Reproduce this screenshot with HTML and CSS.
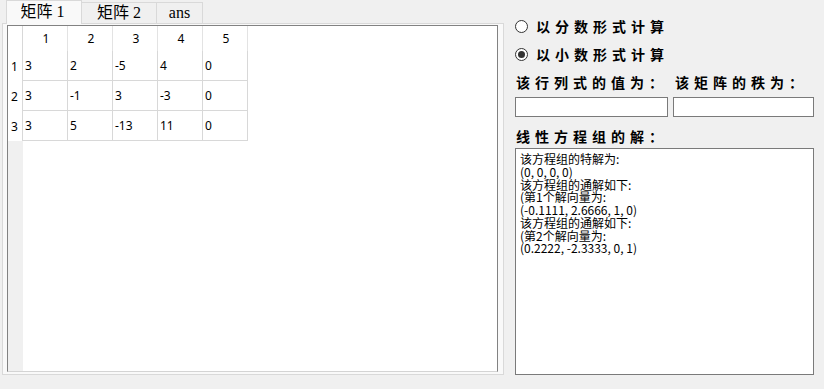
FILE: index.html
```html
<!DOCTYPE html>
<html lang="zh-CN">
<head>
<meta charset="utf-8">
<title>矩阵计算</title>
<link rel="stylesheet" href="styles.css">
</head>
<body>
<div class="window">
  <div class="tabwidget">
    <div class="tabbar">
      <div class="tab tab-1 selected">矩阵 1</div>
      <div class="tab tab-2">矩阵 2</div>
      <div class="tab tab-3">ans</div>
    </div>
    <div class="page">
      <div class="table">
        <div class="grid">
          <div class="corner"></div>
          <div class="hh">1</div><div class="hh">2</div><div class="hh">3</div><div class="hh">4</div><div class="hh">5</div>
          <div class="vh">1</div>
          <div class="cell">3</div><div class="cell">2</div><div class="cell">-5</div><div class="cell">4</div><div class="cell">0</div>
          <div class="vh">2</div>
          <div class="cell">3</div><div class="cell">-1</div><div class="cell">3</div><div class="cell">-3</div><div class="cell">0</div>
          <div class="vh">3</div>
          <div class="cell">3</div><div class="cell">5</div><div class="cell">-13</div><div class="cell">11</div><div class="cell">0</div>
        </div>
        <div class="filler"><div class="vh-strip"></div></div>
      </div>
    </div>
  </div>
  <div class="panel">
    <div class="radio-row"><span class="radio"></span><span class="brush">以分数形式计算</span></div>
    <div class="radio-row"><span class="radio checked"></span><span class="brush">以小数形式计算</span></div>
    <div class="label-row"><span class="brush det-label">该行列式的值为：</span><span class="brush">该矩阵的秩为：</span></div>
    <div class="input-row"><div class="input input-det"></div><div class="input input-rank"></div></div>
    <div class="label-row solve-row"><span class="brush">线性方程组的解：</span></div>
    <div class="output">
      <div class="line">该方程组的特解为:</div>
      <div class="line">(0, 0, 0, 0)</div>
      <div class="line">该方程组的通解如下:</div>
      <div class="line">(第1个解向量为:</div>
      <div class="line">(-0.1111, 2.6666, 1, 0)</div>
      <div class="line">该方程组的通解如下:</div>
      <div class="line">(第2个解向量为:</div>
      <div class="line">(0.2222, -2.3333, 0, 1)</div>
    </div>
  </div>
</div>
</body>
</html>
```

FILE: styles.css
```css
html, body {
  margin: 0;
  padding: 0;
}
body {
  background: #f0f0f0;
  width: 824px;
  height: 389px;
  overflow: hidden;
  font-family: "Noto Sans", "Noto Sans CJK SC", sans-serif;
}
.window {
  display: flex;
  align-items: flex-start;
  padding-left: 2px;
  gap: 11px;
}
.tabwidget {
  width: 502px;
  display: flex;
  flex-direction: column;
}
.tabbar {
  display: flex;
  align-items: flex-start;
  height: 23px;
  padding-left: 4px;
  position: relative;
  z-index: 1;
}
.tab {
  box-sizing: border-box;
  height: 21px;
  margin-top: 2px;
  border: 1px solid #d9d9d9;
  border-bottom: none;
  border-left: none;
  background: #f0f0f0;
  font-family: "Liberation Serif", "Noto Sans CJK SC", serif;
  font-size: 16px;
  color: #000;
  display: flex;
  align-items: center;
  justify-content: center;
  line-height: 1;
}
.tab-1 { width: 76px; padding-right: 3px; }
.tab-2 { width: 75px; }
.tab-3 { width: 46px; }
.tab.selected {
  height: 24px;
  margin-top: 0;
  border-left: 1px solid #d9d9d9;
  background: #f9f9f9;
  padding-bottom: 1px;
}
.page {
  box-sizing: border-box;
  height: 352px;
  border: 1px solid #d9d9d9;
  background: #f9f9f9;
  padding: 1px 5px 2px 4px;
}
.table {
  box-sizing: border-box;
  height: 347px;
  border: 1px solid #828282;
  border-bottom-color: #d4d4d4;
  background: #fff;
  display: flex;
  flex-direction: column;
}
.grid {
  display: grid;
  grid-template-columns: 15px repeat(5, 45px);
  grid-template-rows: 25px repeat(3, 30px);
  font-size: 12px;
  color: #000;
}
.corner, .vh {
  border-right: 1px solid #d8d8d8;
}
.hh {
  border-right: 1px solid #e3e3e3;
  display: flex;
  align-items: center;
  justify-content: center;
  padding-left: 2px;
}
.vh {
  display: flex;
  align-items: center;
  padding-left: 3px;
}
.cell {
  border-right: 1px solid #d8d8d8;
  border-bottom: 1px solid #d8d8d8;
  display: flex;
  align-items: center;
  padding-left: 2px;
}
.filler {
  flex: 1;
  display: flex;
}
.vh-strip {
  width: 15px;
  background: #f0f0f0;
}
.panel {
  width: 299px;
  display: flex;
  flex-direction: column;
  padding-top: 12px;
}
.brush {
  font-family: "Noto Sans CJK SC", sans-serif;
  font-weight: 700;
  font-size: 14px;
  letter-spacing: 5px;
  color: #000;
  line-height: 1;
}
.radio-row {
  height: 28px;
  display: flex;
  align-items: center;
  gap: 8px;
}
.radio {
  box-sizing: border-box;
  width: 13px;
  height: 13px;
  border: 1px solid #333;
  border-radius: 50%;
  background: #fff;
  display: flex;
  align-items: center;
  justify-content: center;
}
.radio.checked::after {
  content: "";
  width: 7px;
  height: 7px;
  border-radius: 50%;
  background: #333;
}
.label-row {
  height: 27px;
  display: flex;
  align-items: center;
  padding-left: 1px;
}
.det-label {
  width: 159px;
}
.input-row {
  display: flex;
  gap: 5px;
  margin-top: 2px;
}
.input {
  box-sizing: border-box;
  height: 20px;
  border: 1px solid #7a7a7a;
  background: #fff;
}
.input-det { width: 153px; }
.input-rank { width: 141px; }
.solve-row {
  height: 24px;
  margin-top: 7px;
}
.output {
  box-sizing: border-box;
  height: 227px;
  border: 1px solid #7a7a7a;
  background: #fff;
  padding: 4px 4px;
  font-family: "Noto Sans CJK SC", sans-serif;
  font-size: 12px;
  color: #000;
}
.line {
  height: 12.75px;
  line-height: 12px;
  white-space: nowrap;
}
```
